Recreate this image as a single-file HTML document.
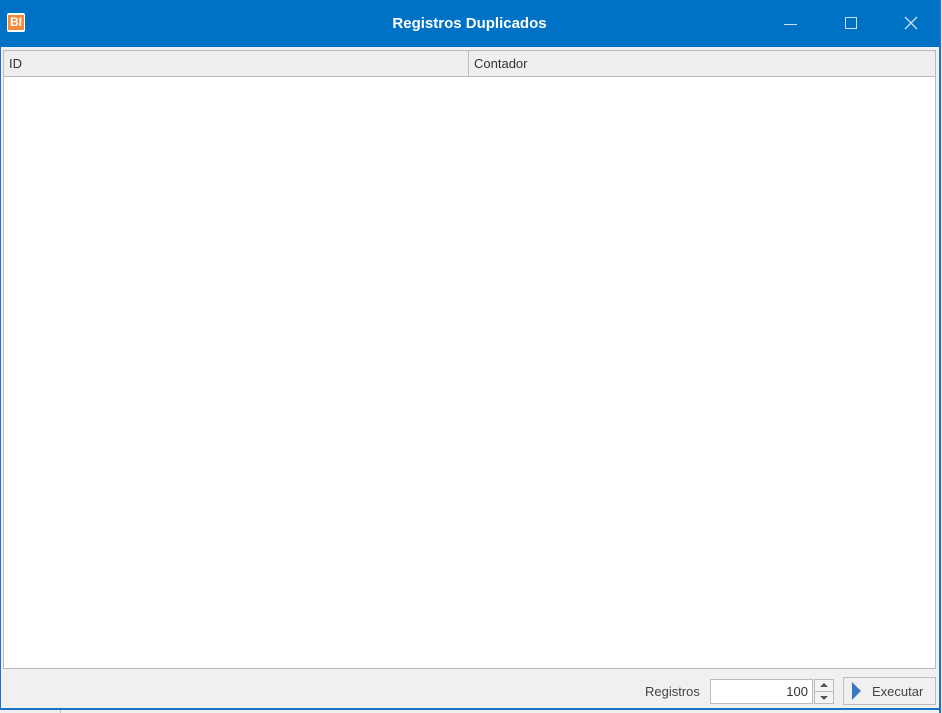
<!DOCTYPE html>
<html><head><style>
*{margin:0;padding:0;box-sizing:border-box}
body{width:942px;height:713px;background:#f0f0f0;position:relative;overflow:hidden;font-family:"Liberation Sans",sans-serif;font-size:13px;color:#333}
.title{position:absolute;left:0;top:0;width:940px;height:47px;background:#0072c6}
.win{position:absolute;left:0;top:0;width:941px;height:709px;border:1px solid #1a73c9;border-top:none}
.abs{position:absolute}
</style></head><body>
<div class="win"></div>
<div class="title">
 <div class="abs" style="left:7px;top:13px;width:18px;height:19px;background:#fff;border-radius:2px"></div>
 <div class="abs" style="left:8px;top:15px;width:16px;height:15px;background:#f58a3c;color:#fff;font-weight:bold;font-size:12px;line-height:15px;text-align:center">BI</div>
 <div class="abs" style="left:0;width:939px;top:15px;text-align:center;color:#fff;font-weight:bold;font-size:15px">Registros Duplicados</div>
 <div class="abs" style="left:784px;top:24px;width:13px;height:1px;background:#cfe0f2"></div>
 <div class="abs" style="left:845px;top:17px;width:12px;height:12px;border:1px solid #cfe0f2"></div>
 <svg class="abs" style="left:904px;top:16px" width="14" height="14"><path d="M1 1L13 13M13 1L1 13" stroke="#cfe0f2" stroke-width="1.3"/></svg>
</div>
<div class="abs" style="left:939px;top:0;width:2px;height:713px;background:#1a73c9"></div>
<div class="abs" style="left:941px;top:0;width:1px;height:713px;background:#e8e8e8"></div>
<div class="abs" style="left:3px;top:50px;width:933px;height:619px;background:#fff;border:1px solid #bcbcbc"></div>
<div class="abs" style="left:4px;top:51px;width:931px;height:26px;background:#efefef;border-bottom:1px solid #bcbcbc"></div>
<div class="abs" style="left:468px;top:51px;width:1px;height:26px;background:#bcbcbc"></div>
<div class="abs" style="left:9px;top:56px">ID</div>
<div class="abs" style="left:474px;top:56px">Contador</div>
<div class="abs" style="left:645px;top:684px;color:#444">Registros</div>
<div class="abs" style="left:710px;top:679px;width:103px;height:25px;background:#fff;border:1px solid #bcbcbc;text-align:right;padding:4px 4px 0 0">100</div>
<div class="abs" style="left:814px;top:679px;width:20px;height:25px;background:#f4f4f4;border:1px solid #bcbcbc"></div>
<div class="abs" style="left:815px;top:691px;width:18px;height:1px;background:#bcbcbc"></div>
<svg class="abs" style="left:819px;top:682px" width="10" height="20"><path d="M1 5L5 1L9 5Z M1 14L9 14L5 18Z" fill="#555"/></svg>
<div class="abs" style="left:843px;top:677px;width:93px;height:28px;background:#f0f0f0;border:1px solid #bcbcbc"></div>
<svg class="abs" style="left:852px;top:682px" width="10" height="18"><path d="M0 0L9 9L0 18Z" fill="#3a78c0"/></svg>
<div class="abs" style="left:872px;top:684px;color:#444">Executar</div>
<div class="abs" style="left:0;top:708px;width:941px;height:2px;background:#1a73c9"></div>
<div class="abs" style="left:60px;top:710px;width:1px;height:3px;background:#bcbcbc"></div>
</body></html>
